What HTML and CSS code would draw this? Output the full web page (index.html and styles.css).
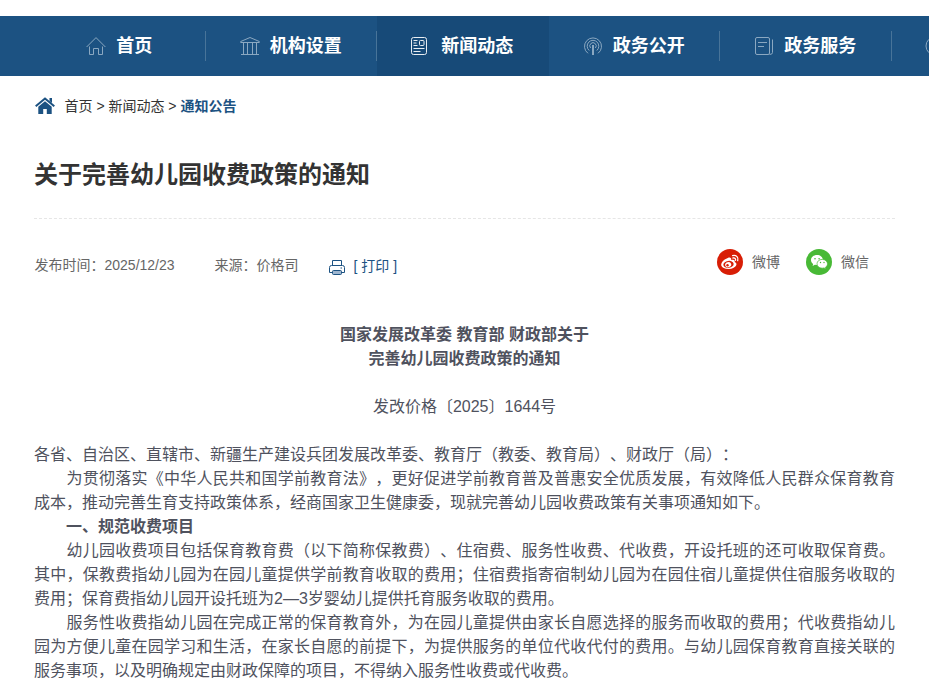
FILE: index.html
```html
<!DOCTYPE html>
<html lang="zh-CN">
<head>
<meta charset="utf-8">
<title>关于完善幼儿园收费政策的通知</title>
<link rel="stylesheet" href="styles.css">
</head>
<body>
<nav class="nav">
  <a class="nav-item"><svg class="nav-icon" viewBox="0 0 20 20"><path d="M.6 11 10 1.600 19.400 11M3.500 10.500v8h4v-6h5v6h4v-8"/></svg>首页</a>
  <a class="nav-item"><svg class="nav-icon" viewBox="0 0 20 20"><path d="M.7 5.500 10 1.500l9.300 4v1H.7zM1 18.500h18M3.500 6.500v12M7.500 6.500v12M12.500 6.500v12M16.500 6.500v12"/></svg>机构设置</a>
  <a class="nav-item active"><svg class="nav-icon" viewBox="0 0 20 20"><rect x="0.500" y="1.500" width="15" height="17" rx="2"/><rect x="8.500" y="4.500" width="4.500" height="5" rx="1"/><path d="M2.500 4.500h4M2.500 7h3M2.500 9.500h4M2.500 12.500h11M2.500 15.500h7"/></svg>新闻动态</a>
  <a class="nav-item"><svg class="nav-icon" viewBox="0 0 20 20"><path d="M5 17.300a8.500 8.500 0 1 1 10 0M6.200 14.500a5.800 5.800 0 1 1 7.600 0M7.600 12a3.200 3.200 0 1 1 4.800 0"/><path class="thick" d="M10 9v10"/></svg>政务公开</a>
  <a class="nav-item"><svg class="nav-icon" viewBox="0 0 20 20"><rect x="1.500" y="1.500" width="14" height="17" rx="1.500"/><path d="M4 6.500h9M4 10.500h6M18.500 3.500v13q0 2-3 2"/></svg>政务服务</a>
  <a class="nav-item last"><svg class="nav-icon" viewBox="0 0 20 20"><circle cx="10" cy="10" r="9"/></svg></a>
</nav>
<main class="page">
  <div class="crumbs">
    <svg class="home" viewBox="0 0 20 17"><path d="M.7 9.200 10 1.500l9.300 7.700" fill="none" stroke="currentColor" stroke-width="2"/><path d="M14.500 1H17v5l-2.500-2zM10 4.200l6.700 5.600V17h-4.900v-5H8.200v5H3.300V9.800z" fill="currentColor"/></svg>
    <span>首页 &gt; 新闻动态 &gt; <b>通知公告</b></span>
  </div>
  <h1>关于完善幼儿园收费政策的通知</h1>
  <div class="meta">
    <span class="date">发布时间：2025/12/23</span>
    <span class="source">来源：价格司</span>
    <a class="print"><svg viewBox="0 0 16 15"><path d="M3.500 5.500v-5h9v5M3 12.500H.5v-5q0-2 2-2h11q2 0 2 2v5H13M11.500 8h1.500" fill="none" stroke="currentColor"/><rect x="3.500" y="10.500" width="9" height="4" rx="1" fill="#9fb6cf" stroke="currentColor"/></svg>[ 打印 ]</a>
    <div class="share">
      <a><svg viewBox="0 0 26 26"><circle cx="13" cy="13" r="13" fill="#d81e06"/><path d="M10.800 9c2.400-1.100 4 .1 3.300 2 2.900-.8 4.300.2 3.500 2.100 4.200 1.500 1.100 6.900-5.700 6.900-8.900 0-9.800-5.400-4.200-9.400z" fill="#fff"/><ellipse cx="11.500" cy="15.400" rx="5.200" ry="3.500" transform="rotate(-8 11.500 15.400)" fill="#d81e06"/><ellipse cx="11.200" cy="15.700" rx="3.100" ry="2.500" transform="rotate(-20 11.200 15.700)" fill="#fff"/><circle cx="10.500" cy="16.200" r="1.200" fill="#d81e06"/><path d="M15.600 6.600c3.700-1 6.300 2 5.100 5.100M16 9c1.900-.4 3 .8 2.500 2.300" fill="none" stroke="#fff" stroke-width="1.300" stroke-linecap="round"/></svg>微博</a>
      <a><svg viewBox="0 0 26 26"><circle cx="13" cy="13" r="13" fill="#48b936"/><path d="M11 6c-3.500 0-6 2.200-6 5 0 1.700.8 3 2.200 3.900L6.600 17l2.300-1.200 2.200.2L17 11C16.700 8 14.300 6 11 6z" fill="#fff"/><path d="M16.200 10.400c-3 0-5.200 2-5.200 4.400s2.200 4.400 5.200 4.400l1.900-.3 1.900 1-.5-1.700c1.300-.8 2-2 2-3.400 0-2.400-2.300-4.400-5.300-4.400z" fill="#fff" stroke="#48b936" stroke-width=".7"/><g fill="#48b936"><circle cx="9" cy="9.700" r=".8"/><circle cx="13.100" cy="9.700" r=".8"/><circle cx="14.500" cy="13.500" r=".7"/><circle cx="18" cy="13.500" r=".7"/></g></svg>微信</a>
    </div>
  </div>
  <article>
    <p class="center"><b>国家发展改革委 教育部 财政部关于<br>完善幼儿园收费政策的通知</b></p>
    <p class="center number">发改价格〔2025〕1644号</p>
    <p>各省、自治区、直辖市、新疆生产建设兵团发展改革委、教育厅（教委、教育局）、财政厅（局）：</p>
    <p>　　为贯彻落实《中华人民共和国学前教育法》，更好促进学前教育普及普惠安全优质发展，有效降低人民群众保育教育成本，推动完善生育支持政策体系，经商国家卫生健康委，现就完善幼儿园收费政策有关事项通知如下。</p>
    <p>　　<b>一、规范收费项目</b></p>
    <p>　　幼儿园收费项目包括保育教育费（以下简称保教费）、住宿费、服务性收费、代收费，开设托班的还可收取保育费。其中，保教费指幼儿园为在园儿童提供学前教育收取的费用；住宿费指寄宿制幼儿园为在园住宿儿童提供住宿服务收取的费用；保育费指幼儿园开设托班为2—3岁婴幼儿提供托育服务收取的费用。</p>
    <p>　　服务性收费指幼儿园在完成正常的保育教育外，为在园儿童提供由家长自愿选择的服务而收取的费用；代收费指幼儿园为方便儿童在园学习和生活，在家长自愿的前提下，为提供服务的单位代收代付的费用。与幼儿园保育教育直接关联的服务事项，以及明确规定由财政保障的项目，不得纳入服务性收费或代收费。</p>
  </article>
</main>
</body>
</html>
```
FILE: styles.css
```css
* { box-sizing: border-box; }
html { overflow: hidden; }
body {
  margin: 0;
  padding-top: 16px;
  height: 684px;
  overflow: hidden;
  background: #fff;
  color: #333;
  font: 14px/20px "Liberation Sans", "Noto Sans CJK SC", sans-serif;
  text-spacing-trim: space-all;
}
.nav {
  display: flex;
  height: 60px;
  padding-left: 34px;
  overflow: hidden;
  background: #1c5282;
}
.nav-item {
  display: flex;
  flex: 0 0 171.500px;
  align-items: center;
  justify-content: center;
  gap: 10px;
  padding-right: 1px;
  color: #fff;
  font-size: 18px;
  font-weight: 700;
  line-height: 26px;
  white-space: nowrap;
  background: linear-gradient(#487499, #487499) right center / 1px 30px no-repeat;
}
.nav-item.active { background: #174a78; }
.nav-item.last {
  flex: 1 1 0;
  min-width: 0;
  justify-content: flex-start;
  padding: 0 0 0 33px;
  background: none;
}
.nav-icon {
  flex: none;
  width: 20px;
  height: 20px;
  fill: none;
  stroke: #8ba8c1;
  stroke-width: 1;
}
.nav-icon .thick { stroke-width: 2; }
.active .nav-icon { stroke: #e8edf2; }
.page { padding: 0 34px; }
.crumbs {
  display: flex;
  align-items: center;
  gap: 10px;
  height: 60px;
  padding-left: .5px;
}
.crumbs b, .home { color: #1c5282; }
.home { width: 20px; height: 17px; margin-top: -1px; }
h1 {
  margin: 0;
  height: 83px;
  padding-top: 19px;
  border-bottom: 1px dashed #e6e6e6;
  font-size: 24px;
  line-height: 40px;
}
.meta {
  display: flex;
  height: 104px;
  padding: 36px 0 0 .5px;
  color: #666;
}
.source { margin-left: 40px; }
.print {
  display: flex;
  align-items: center;
  gap: 9px;
  height: 22px;
  margin-left: 30px;
  color: #1c5282;
}
.print svg { width: 16px; height: 15px; margin-top: 2px; }
.share {
  display: flex;
  gap: 26px;
  margin: -6px 26px 0 auto;
}
.share a { display: flex; align-items: center; gap: 9px; height: 26px; }
.share svg { width: 26px; height: 26px; }
article {
  color: #4f525e;
  font-size: 16px;
  line-height: 24px;
}
article p { margin: 0; text-align: justify; }
article .center { text-align: center; }
article .number { margin: 24px 0; }
```
